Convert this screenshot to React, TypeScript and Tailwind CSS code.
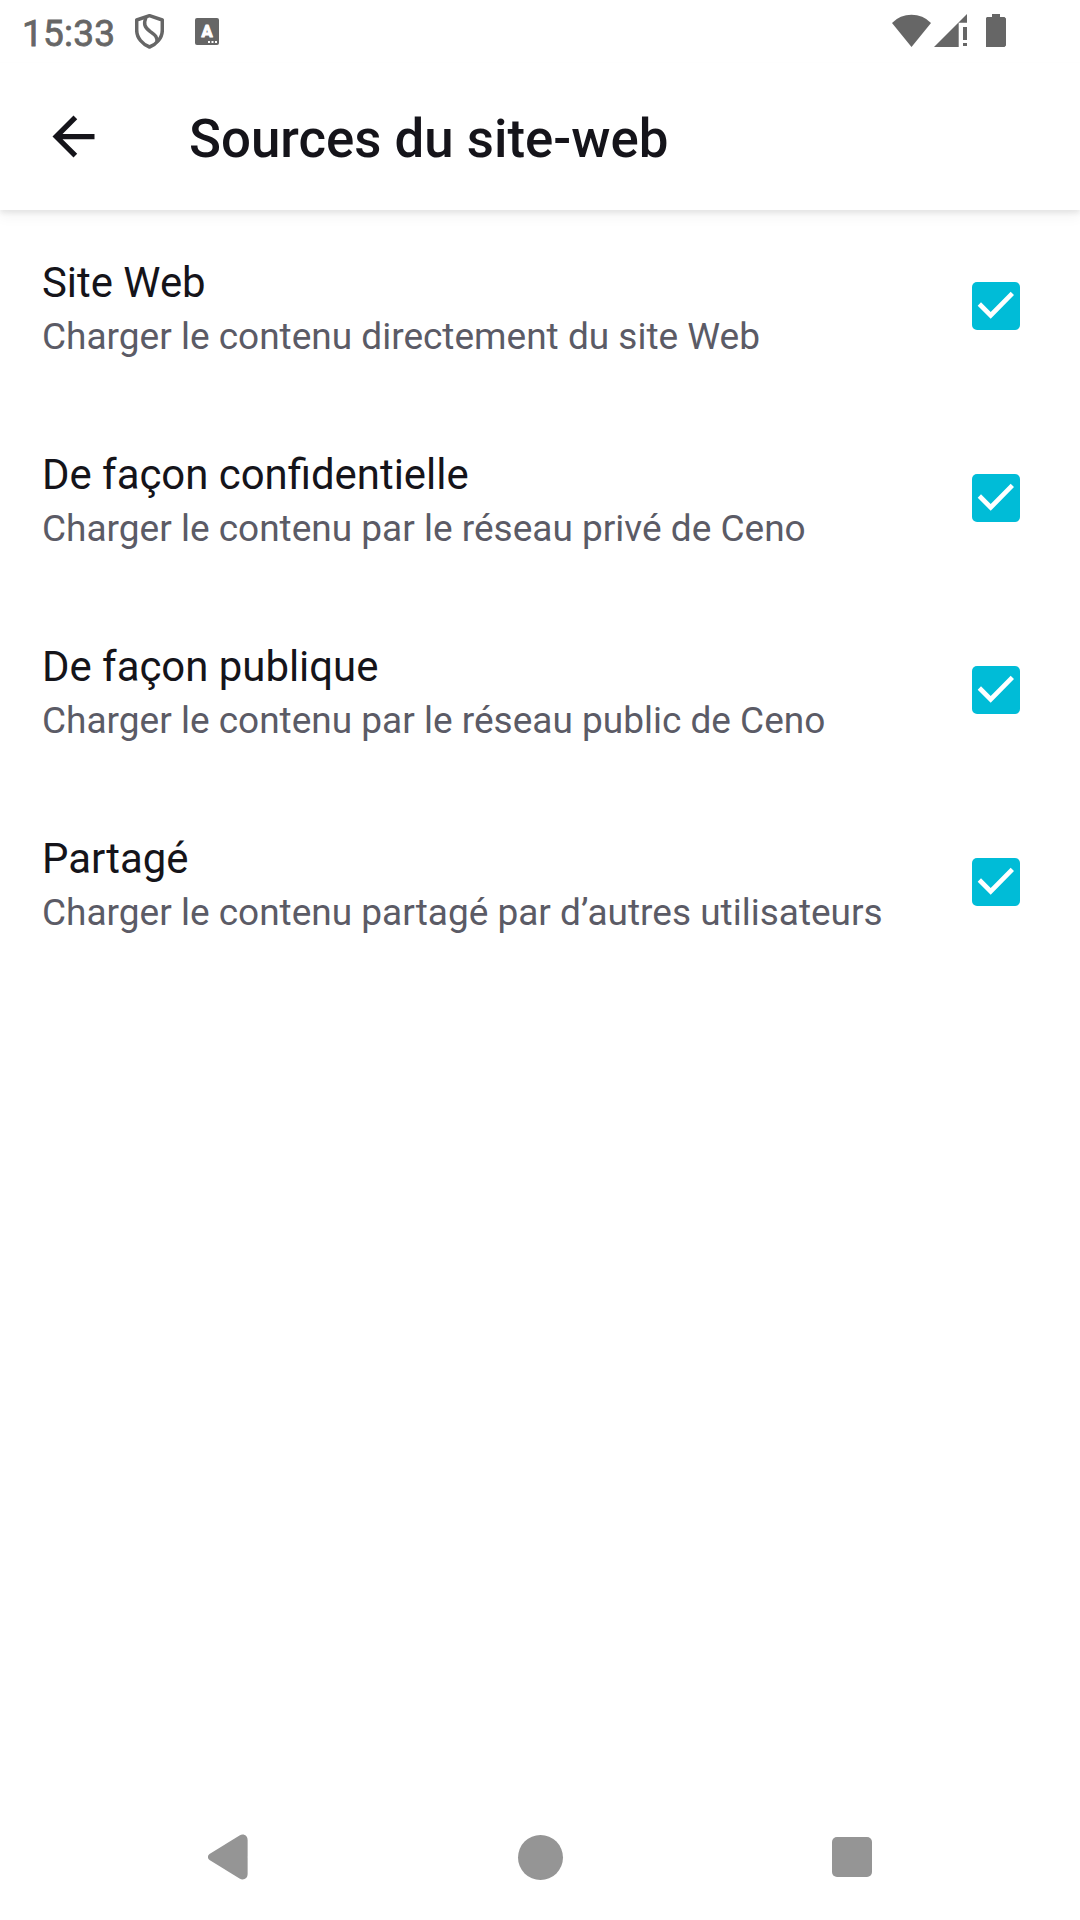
import React from "react";

const sources = [
  { title: "Site Web", summary: "Charger le contenu directement du site Web" },
  { title: "De façon confidentielle", summary: "Charger le contenu par le réseau privé de Ceno" },
  { title: "De façon publique", summary: "Charger le contenu par le réseau public de Ceno" },
  { title: "Partagé", summary: "Charger le contenu partagé par d’autres utilisateurs" },
];

function StatusBar() {
  return (
    <div className="flex h-[63px] shrink-0 items-start justify-between pl-[22px] pr-[74px] text-[#666]">
      <div className="flex items-start">
        <span className="w-[113px] pt-[2px] text-[37px] leading-[63px] tracking-[0.2px] [-webkit-text-stroke:0.8px_currentColor]">15:33</span>
        <svg className="mt-[14px] h-[35px] w-[29px]" viewBox="0 0 29 35" fill="none" stroke="currentColor" strokeWidth="3.5" strokeLinejoin="round">
          <path d="M14.5 1.7 27.3 6V16C27.3 24 21.5 30.3 14.5 33 7.5 30.3 1.7 24 1.7 16V6Z" />
          <path d="M11 3C8.4 10 9.4 13 15 17.4 20 21 22.5 22.5 22 28" />
        </svg>
        <svg className="ml-[31px] mt-[18px] h-[27px] w-[24px]" viewBox="0 0 24 27">
          <rect width="24" height="27" rx="2" fill="currentColor" />
          <text x="12" y="19" textAnchor="middle" fontFamily="Roboto, sans-serif" fontWeight="700" fontSize="16.5" fill="#fff" stroke="#fff" strokeWidth="1" strokeLinejoin="round">A</text>
          <path d="M13 24h2M16.5 24h2M20 24h2" stroke="#fff" strokeWidth="2" />
        </svg>
      </div>
      <div className="flex items-start pt-[14px]">
        <svg className="h-[33px] w-[39px]" viewBox="0 0 39 33" fill="currentColor">
          <path d="M0 9A27 27 0 0 1 39 9L19.5 33Z" />
        </svg>
        <svg className="ml-[3px] h-[33px] w-[33px]" viewBox="0 0 33 33" fill="currentColor">
          <path d="M0 33 33 0V8.7H24.7V33ZM29 13h4v13h-4ZM29 29h4v3h-4Z" />
        </svg>
        <svg className="ml-[19px] h-[33px] w-[20px]" viewBox="0 0 20 33" fill="currentColor">
          <path d="M6 0h8v3h4.5L20 4.5V31.5L18.5 33H0V4L1 3H6Z" />
        </svg>
      </div>
    </div>
  );
}

function Toolbar() {
  return (
    <header className="z-10 flex h-[147px] shrink-0 items-center bg-white pl-[42px] shadow-[0_3px_5px_rgba(0,0,0,0.08),0_8px_12px_rgba(0,0,0,0.04)]">
      <button aria-label="Retour" className="size-[63px] shrink-0 text-[#15141a]">
        <svg className="size-[63px]" viewBox="0 0 24 24" fill="currentColor">
          <path d="M20 11H7.83l5.59-5.59L12 4l-8 8 8 8 1.41-1.41L7.83 13H20v-2z" />
        </svg>
      </button>
      <h1 className="ml-[84px] whitespace-nowrap pt-[4px] text-[52.8px] font-medium leading-[62px] text-[#15141a]">Sources du site-web</h1>
    </header>
  );
}

function CheckedBox() {
  return (
    <div role="checkbox" aria-checked="true" className="size-[48px] shrink-0 rounded-[5px] bg-[#00bcd7]">
      <svg className="size-[48px]" viewBox="0 0 48 48" fill="#fff">
        <path d="M5.7 23.7 9 20.3 18.7 30 38.7 9.7 42 13 18.7 36.8Z" />
      </svg>
    </div>
  );
}

export default function App() {
  return (
    <div className="flex h-[1920px] w-[1080px] flex-col overflow-hidden bg-white font-['Roboto',sans-serif]">
      <StatusBar />
      <Toolbar />
      <main className="flex-1">
        {sources.map(({ title, summary }) => (
          <div key={title} className="flex h-[192px] items-center justify-between pl-[42px] pr-[60px]">
            <div className="pt-[4px]">
              <div className="whitespace-nowrap text-[41.9px] leading-[58px] text-[#15141a]">{title}</div>
              <div className="whitespace-nowrap text-[37px] leading-[50px] text-[#5b5b66]">{summary}</div>
            </div>
            <CheckedBox />
          </div>
        ))}
      </main>
      <nav className="mx-auto grid h-[126px] w-[936px] shrink-0 grid-cols-3 place-items-center text-[#959595]">
        <svg className="h-[46px] w-[40px]" viewBox="0 0 40 46" fill="currentColor">
          <path d="M1.5 20 31.5 1.4C35.5-.8 39.6 1.5 39.6 6V40C39.6 44.5 35.5 46.8 31.5 44.6L1.5 26C-.7 24.5-.7 21.5 1.5 20Z" />
        </svg>
        <div className="size-[45px] rounded-full bg-current" />
        <div className="size-[40px] rounded-[5px] bg-current" />
      </nav>
    </div>
  );
}
